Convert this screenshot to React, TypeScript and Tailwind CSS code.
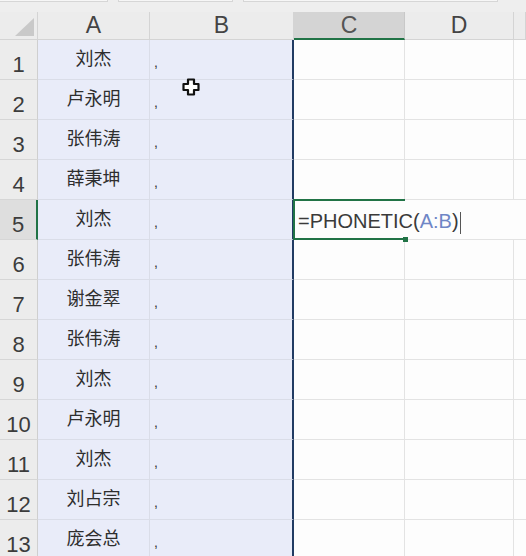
import React from 'react';

const names = [
  '刘杰',
  '卢永明',
  '张伟涛',
  '薛秉坤',
  '刘杰',
  '张伟涛',
  '谢金翠',
  '张伟涛',
  '刘杰',
  '卢永明',
  '刘杰',
  '刘占宗',
  '庞会总',
];

const cols = ['A', 'B', 'C', 'D', ''];

export default function App() {
  return (
    <div
      className="relative h-[556px] w-[526px] overflow-hidden bg-[#fdfdfd] text-[#3a3a3a]"
      style={{ fontFamily: '"Liberation Sans", "Noto Sans CJK SC", sans-serif' }}
    >
      {/* toolbar remnants */}
      <div className="flex h-[12px] gap-[10px] bg-[#eeeeee]">
        <div className="h-[2px] w-[108px] border-b border-r border-[#d6d6d6] bg-[#f6f6f6]" />
        <div className="h-[2px] w-[115px] border-b border-x border-[#d6d6d6] bg-[#f6f6f6]" />
        <div className="h-[2px] w-[255px] border-b border-x border-[#d6d6d6] bg-[#f6f6f6]" />
      </div>

      <div className="grid grid-cols-[38px_112px_144px_111px_109px_1fr] grid-rows-[28px_repeat(13,40px)]">
        {/* header row */}
        <div className="relative border-b border-r border-[#d4d4d4] bg-[#ececec]">
          <svg className="absolute left-[15px] top-[6px]" width="19" height="18" viewBox="0 0 19 18">
            <polygon points="19,0 19,18 0,18" fill="#c9c9c9" />
          </svg>
        </div>
        {cols.map((c) => (
          <div
            key={c || 'e'}
            className={`flex items-center justify-center border-r text-[23px] ${
              c === 'C'
                ? 'border-b-2 border-b-[#217346] border-r-[#c8c8c8] bg-[#d4d4d4] text-[#555]'
                : 'border-b border-[#d4d4d4] bg-[#ececec] text-[#444]'
            }`}
          >
            {c}
          </div>
        ))}

        {names.map((name, i) => {
          const active = i === 4;
          return (
            <React.Fragment key={i}>
              <div
                className={`flex items-end justify-center pb-[3px] text-[22px] leading-none text-[#3c3c3c] border-b border-[#d6d6d6] ${
                  active ? 'border-r-2 border-r-[#217346] bg-[#dedede]' : 'border-r border-r-[#cfcfcf] bg-[#ececec]'
                }`}
              >
                {i + 1}
              </div>
              <div className="flex items-center justify-center border-b border-r border-[#dadde8] bg-[#e9ecf9] text-[18px] text-[#2e2e2e]">
                {name}
              </div>
              <div className="flex items-end border-b border-r-2 border-b-[#dadde8] border-r-[#213b63] bg-[#e9ecf9] pb-[10px] pl-[4px] text-[14px] leading-none text-[#333]">
                ,
              </div>
              <div
                className={`relative flex items-center border-b border-[#e3e3e3] ${
                  active ? 'z-10 border-r-transparent' : 'border-r'
                }`}
              >
                {active && (
                  <>
                    <div className="pointer-events-none absolute -left-[1px] -top-[1px] bottom-[-1px] right-0 border-2 border-r-0 border-[#217346]" />
                    <div className="absolute -bottom-[3px] right-[-3px] h-[5px] w-[5px] bg-[#217346]" />
                    <span className="mt-[6px] whitespace-nowrap pl-[4px] text-[20px] leading-none text-[#3a3a3a]">
                      =PHONETIC(<span className="text-[#6f86c6]">A:B</span>)
                      <span className="ml-[1px] inline-block h-[22px] w-[1px] align-middle bg-[#555]" />
                    </span>
                  </>
                )}
              </div>
              <div className={`border-b border-[#e3e3e3] ${active ? '' : 'border-r'}`} />
              <div className="border-b border-[#e3e3e3]" />
            </React.Fragment>
          );
        })}
      </div>

      {/* mouse cursor */}
      <svg className="absolute left-[182px] top-[78px]" width="18" height="18" viewBox="0 0 18 18">
        <path
          d="M6 1.5h6v4.5h4.5v6h-4.5v4.5h-6v-4.5h-4.5v-6h4.5z"
          fill="#fff"
          stroke="#111"
          strokeWidth="2.2"
          strokeLinejoin="round"
        />
      </svg>
    </div>
  );
}
